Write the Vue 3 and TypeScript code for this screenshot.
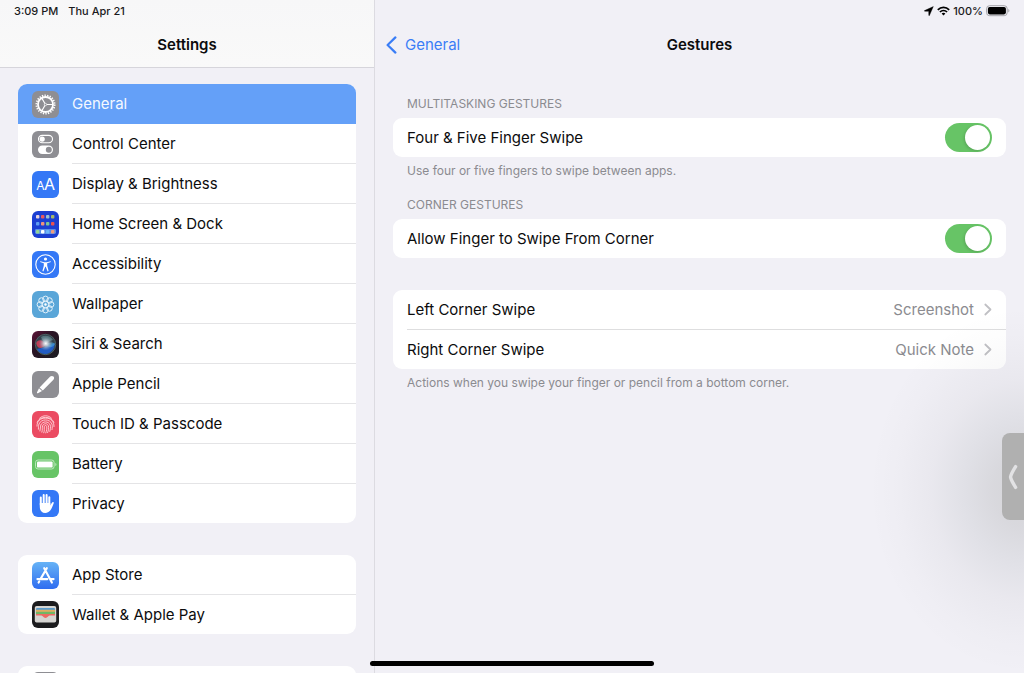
<script setup lang="ts">
import { ref } from 'vue'

interface Item {
  id: string
  label: string
}

const groups: Item[][] = [
  [
    { id: 'general', label: 'General' },
    { id: 'control', label: 'Control Center' },
    { id: 'display', label: 'Display & Brightness' },
    { id: 'home', label: 'Home Screen & Dock' },
    { id: 'access', label: 'Accessibility' },
    { id: 'wallpaper', label: 'Wallpaper' },
    { id: 'siri', label: 'Siri & Search' },
    { id: 'pencil', label: 'Apple Pencil' },
    { id: 'touch', label: 'Touch ID & Passcode' },
    { id: 'battery', label: 'Battery' },
    { id: 'privacy', label: 'Privacy' },
  ],
  [
    { id: 'store', label: 'App Store' },
    { id: 'wallet', label: 'Wallet & Apple Pay' },
  ],
  [{ id: 'more', label: '' }],
]

const tileFill: Record<string, string> = {
  general: '#8e8e93',
  control: '#8e8e93',
  display: '#3478f6',
  home: '#1c3fd2',
  access: '#3478f6',
  wallpaper: '#5aa6d8',
  siri: 'url(#siri-base)',
  pencil: '#8e8e93',
  touch: '#eb4b62',
  battery: '#67c466',
  privacy: '#3478f6',
  store: 'url(#store-base)',
  wallet: '#1c1c1e',
  more: '#8e8e93',
}

const homeDots: { x: number; y: number; fill: string }[] = [
  ['#e6d3dc', '#ea5a5c', '#9cc0cc', '#a8b866'],
  ['#5f9df0', '#f0937c', '#7cc596', '#ea5350'],
  ['#93d494', '#ffffff', '#6db5f7', '#f29c7c'],
].flatMap((row, r) => row.map((fill, c) => ({ x: 4 + c * 5, y: [4, 11, 19][r], fill })))

const petals = Array.from({ length: 8 }, (_, i) => ({
  x: 13.5 + 5.6 * Math.cos((i * Math.PI) / 4),
  y: 13.5 + 5.6 * Math.sin((i * Math.PI) / 4),
}))

const active = ref('general')
const multitask = ref(true)
const corner = ref(true)
const corners = [
  { label: 'Left Corner Swipe', value: 'Screenshot' },
  { label: 'Right Corner Swipe', value: 'Quick Note' },
]
</script>

<template>
  <div class="screen">
    <aside class="sidebar">
      <header class="side-head">
        <div class="status">
          <span>3:09 PM</span>
          <span>Thu Apr 21</span>
        </div>
        <h1 class="title">Settings</h1>
      </header>
      <nav class="side-body">
        <ul v-for="(group, g) in groups" :key="g" class="card">
          <li v-for="item in group" :key="item.id">
            <button type="button" class="item" :class="{ active: active === item.id }" @click="active = item.id">
              <svg class="tile" viewBox="0 0 27 27" aria-hidden="true">
                <defs v-if="item.id === 'siri'">
                  <linearGradient id="siri-base" x1="0" y1="0" x2="1" y2="1">
                    <stop offset="0" stop-color="#5e1438" />
                    <stop offset="0.4" stop-color="#2a1424" />
                    <stop offset="1" stop-color="#1b1d22" />
                  </linearGradient>
                  <radialGradient id="siri-glow">
                    <stop offset="0" stop-color="#ffffff" />
                    <stop offset="0.35" stop-color="#c9d3dc" stop-opacity="0.85" />
                    <stop offset="1" stop-color="#8fa6b8" stop-opacity="0" />
                  </radialGradient>
                </defs>
                <defs v-if="item.id === 'store'">
                  <linearGradient id="store-base" x1="0" y1="0" x2="0" y2="1">
                    <stop offset="0" stop-color="#66b3f6" />
                    <stop offset="1" stop-color="#2f6df0" />
                  </linearGradient>
                </defs>
                <rect width="27" height="27" rx="6" :fill="tileFill[item.id]" />

                <g v-if="item.id === 'general'" fill="none" stroke="#fff">
                  <circle cx="13.5" cy="13.5" r="9.1" stroke-width="1.8" stroke-dasharray="1.3 1.3" />
                  <circle cx="13.5" cy="13.5" r="7.5" stroke-width="1.8" />
                  <path d="M13.5 13.5H21M13.5 13.5L9.8 7.1M13.5 13.5L9.8 19.9" stroke-width="1.1" />
                  <circle cx="13.5" cy="13.5" r="1.2" fill="#8e8e93" stroke-width="0.7" />
                </g>

                <g v-else-if="item.id === 'control'">
                  <rect x="6.5" y="4.4" width="14" height="7.4" rx="3.7" fill="none" stroke="#fff" stroke-width="1.1" />
                  <circle cx="10.2" cy="8.1" r="2.6" fill="#fff" />
                  <rect x="6" y="14.6" width="15" height="8.4" rx="4.2" fill="#fff" />
                  <circle cx="16.8" cy="18.8" r="3" fill="#8e8e93" />
                </g>

                <g v-else-if="item.id === 'display'" class="glyph-text">
                  <text x="4.2" y="19" font-size="12">A</text>
                  <text x="12" y="19" font-size="16">A</text>
                </g>

                <g v-else-if="item.id === 'home'">
                  <rect x="3" y="18" width="21" height="5" rx="1.4" fill="#5b8ee8" />
                  <rect v-for="(d, i) in homeDots" :key="i" :x="d.x" :y="d.y" width="3.4" height="3.4" rx="0.9" :fill="d.fill" />
                </g>

                <g v-else-if="item.id === 'access'">
                  <circle cx="13.5" cy="13.5" r="9.7" fill="none" stroke="#fff" stroke-width="1.1" />
                  <circle cx="13.5" cy="8" r="1.6" fill="#fff" />
                  <path d="M8.3 10.2L12.2 11.2H14.8L18.7 10.2L18.9 11.1L15.2 12.3V14.8L16.6 20L15.6 20.4L13.8 15.8H13.2L11.4 20.4L10.4 20L11.8 14.8V12.3L8.1 11.1Z" fill="#fff" />
                </g>

                <g v-else-if="item.id === 'wallpaper'" fill="none" stroke="#e4f2fb" stroke-width="1">
                  <circle v-for="(p, i) in petals" :key="i" :cx="p.x" :cy="p.y" r="2.8" />
                  <circle cx="13.5" cy="13.5" r="3.6" />
                  <circle cx="13.5" cy="13.5" r="1" fill="#fff" />
                </g>

                <g v-else-if="item.id === 'siri'">
                  <circle cx="13.5" cy="13.5" r="10.2" fill="#35404c" stroke="#4f6e6c" stroke-width="0.8" />
                  <path d="M4.2 12C6 7.5 11 9 14 13C10 19 5 18 4.2 12Z" fill="#d8415c" opacity="0.85" />
                  <path d="M5 18C10 17 14 16 22.5 12C23.5 18 18 23.5 13 23C9 22.6 6.5 21 5 18Z" fill="#1e62d8" opacity="0.85" />
                  <path d="M9 6C13 3.5 19 5 21 9C18 10 15 11 13 13C11 10.5 10 8.5 9 6Z" fill="#62838b" opacity="0.8" />
                  <path d="M14 14C17 11 21 11 23 13C21 17 17 17 14 14Z" fill="#4aa8d8" opacity="0.6" />
                  <circle cx="13.8" cy="12.5" r="7" fill="url(#siri-glow)" />
                </g>

                <g v-else-if="item.id === 'pencil'" fill="#fff">
                  <path d="M7.6 16.4L18.2 5.6C19.2 4.7 20.6 4.7 21.5 5.6C22.4 6.5 22.3 7.9 21.4 8.8L10.8 19.5Z" />
                  <path d="M7 17.2L10 20.1L5.9 22.2C5.2 22.5 4.7 22 5 21.3Z" />
                </g>

                <g v-else-if="item.id === 'touch'" fill="none" stroke="#ffd5da" stroke-width="0.9" stroke-linecap="round">
                  <path d="M7.6 7.2C11 3.9 16.2 3.9 19.5 7.2" />
                  <path d="M5.2 11.2C7.5 4.7 19.6 4.5 21.9 11.4" />
                  <path d="M5 15.2C4.8 9.8 8.5 7.1 13.5 7.1C18.8 7.1 22.2 10.2 22 15.6" />
                  <path d="M6.4 18.2C6.5 16 6.3 14.8 7 13C9.3 7.5 17.9 7.6 20 13.2C20.5 15 20.3 16.6 20 18.6" />
                  <path d="M8 20C8.6 18 8.2 15.8 8.8 14C10.6 9.9 16.5 9.9 18.2 14C18.8 16.2 18.4 18.4 17.8 20.4" />
                  <path d="M9.9 21.2C10.7 18.8 10 16.5 10.6 14.8C11.8 12 15.3 12 16.4 14.8C17 17 16.4 19.6 15.6 21.6" />
                  <path d="M11.8 21.8C12.8 19.4 12 17.4 12.3 15.6C12.8 14 14.3 14.1 14.7 15.6C15 17.6 14.6 19.8 13.8 21.9" />
                </g>

                <g v-else-if="item.id === 'battery'">
                  <rect x="3.5" y="9" width="18.6" height="9" rx="2.5" fill="none" stroke="#c5eac5" stroke-width="0.9" />
                  <rect x="5" y="10.4" width="15.6" height="6.2" rx="1.2" fill="#fff" />
                  <path d="M23.4 12V15C24.8 14.6 24.8 12.4 23.4 12Z" fill="#c5eac5" />
                </g>

                <g v-else-if="item.id === 'privacy'">
                  <g fill="none" stroke="#fff" stroke-linecap="round" stroke-width="2">
                    <path d="M8.8 7.4V15M11.7 5.1V14M14.6 5.1V14M17.3 7.2V15" />
                  </g>
                  <path d="M7.8 13H18.3V15.6C19.2 14.4 19.6 12.6 20.7 12C21.5 11.8 22 12.4 21.8 13.1C20.8 15.6 20 18.4 18.2 20.6C16.8 22.3 15.3 23 13.3 23C9.7 23 7.8 20.4 7.8 17Z" fill="#fff" />
                </g>

                <g v-else-if="item.id === 'store'" fill="none" stroke="#fff" stroke-width="2.1" stroke-linecap="round">
                  <path d="M12.2 6.2L19.9 20.6M14.8 6.2L8.6 16.9M5.4 17.1H15.4M19 17.1H21.6M7.2 19.5L6.6 20.6" />
                </g>

                <g v-else-if="item.id === 'wallet'">
                  <rect x="2.8" y="5" width="21.4" height="16.6" rx="1.8" fill="#d6d5d2" />
                  <rect x="4" y="7" width="19" height="3" rx="1" fill="#5b9bcb" />
                  <rect x="4" y="8.8" width="19" height="2.2" fill="#dfae62" />
                  <rect x="4" y="10.8" width="19" height="2.4" fill="#70b765" />
                  <path d="M4 12.9H23V14.6H17.6C16 14.8 15.8 16.9 13.5 16.9S11 14.8 9.4 14.6H4Z" fill="#ed6a62" />
                </g>
              </svg>
              <span class="label">{{ item.label }}</span>
            </button>
          </li>
        </ul>
      </nav>
    </aside>

    <main class="pane">
      <header class="pane-head">
        <div class="status right">
          <svg width="10" height="10" viewBox="0 0 10 10" aria-hidden="true">
            <path d="M9.3 0.6L0.6 4.6C0.2 4.8 0.3 5.2 0.7 5.2L4.7 5.3L4.8 9.3C4.8 9.7 5.2 9.8 5.4 9.4Z" fill="#000" stroke="#000" stroke-width="0.4" />
          </svg>
          <svg width="13" height="10" viewBox="0 0 13 10" aria-hidden="true">
            <g fill="none" stroke="#000" stroke-width="1.7">
              <path d="M0.8 3.8C4 0.6 9 0.6 12.2 3.8" />
              <path d="M2.9 6C5 4 8 4 10.1 6" />
            </g>
            <path d="M4.6 7.6C5.7 6.6 7.3 6.6 8.4 7.6L6.5 9.6Z" fill="#000" />
          </svg>
          <span>100%</span>
          <svg width="24" height="12" viewBox="0 0 24 12" aria-hidden="true">
            <rect x="0.6" y="0.7" width="20.6" height="10" rx="3" fill="none" stroke="#a3a3a8" stroke-width="1" />
            <rect x="1.9" y="2" width="18" height="7.4" rx="1.8" fill="#000" />
            <path d="M22.3 4V7.4C23.8 7 23.8 4.4 22.3 4Z" fill="#a3a3a8" />
          </svg>
        </div>
        <div class="bar">
          <button type="button" class="back">
            <svg width="11" height="18" viewBox="0 0 11 18" aria-hidden="true">
              <path d="M9.4 1.4L1.6 9L9.4 16.6" fill="none" stroke="#3a7df6" stroke-width="2.2" stroke-linecap="round" stroke-linejoin="round" />
            </svg>
            <span>General</span>
          </button>
          <h2 class="title">Gestures</h2>
        </div>
      </header>

      <div class="pane-body">
        <section class="section">
          <h3 class="caption">MULTITASKING GESTURES</h3>
          <div class="card">
            <label class="row">
              <span>Four &amp; Five Finger Swipe</span>
              <input v-model="multitask" type="checkbox" role="switch" class="switch" />
            </label>
          </div>
          <p class="caption">Use four or five fingers to swipe between apps.</p>
        </section>

        <section class="section after-note">
          <h3 class="caption">CORNER GESTURES</h3>
          <div class="card">
            <label class="row">
              <span>Allow Finger to Swipe From Corner</span>
              <input v-model="corner" type="checkbox" role="switch" class="switch" />
            </label>
          </div>
        </section>

        <section class="section after-card">
          <ul class="card">
            <li v-for="c in corners" :key="c.label" class="choice">
              <button type="button" class="row">
                <span>{{ c.label }}</span>
                <span class="value">
                  {{ c.value }}
                  <svg width="8" height="13" viewBox="0 0 8 13" aria-hidden="true">
                    <path d="M1.3 1.5L6.5 6.5L1.3 11.5" fill="none" stroke="#c0c0c4" stroke-width="1.8" stroke-linecap="round" stroke-linejoin="round" />
                  </svg>
                </span>
              </button>
            </li>
          </ul>
          <p class="caption">Actions when you swipe your finger or pencil from a bottom corner.</p>
        </section>
      </div>
    </main>

    <div class="drawer">
      <button type="button" class="handle" aria-label="Open drawer">
        <svg width="10" height="26" viewBox="0 0 10 26" aria-hidden="true">
          <path d="M7.6 2.6C5 6.7 3.4 9.6 2.7 12.2Q2.4 13 2.7 13.8C3.4 16.4 5 19.3 7.6 23.4" fill="none" stroke="#e2e2e4" stroke-width="3.4" stroke-linecap="round" />
        </svg>
      </button>
    </div>
    <div class="home-bar"></div>
  </div>
</template>

<style>
body {
  margin: 0;
  background: #f1f0f6;
}
</style>

<style scoped>
.screen {
  position: relative;
  display: grid;
  grid-template-columns: 375px minmax(0, 1fr);
  height: 100vh;
  overflow: hidden;
  background: #f1f0f6;
  color: #0c0c0d;
  font-family: Inter, 'Liberation Sans', sans-serif;
  font-size: 15px;
  line-height: 20px;
}

.screen *,
.screen *::before {
  box-sizing: border-box;
}

button {
  padding: 0;
  border: 0;
  background: none;
  color: inherit;
  font: inherit;
  text-align: left;
  cursor: pointer;
}

ul {
  margin: 0;
  padding: 0;
  list-style: none;
}

svg {
  display: block;
  flex: none;
}

.sidebar {
  display: flex;
  flex-direction: column;
  min-height: 0;
  overflow: hidden;
  border-right: 1px solid #dcdbe1;
}

.side-head {
  flex: none;
  height: 68px;
  border-bottom: 1px solid #d6d5db;
  background: linear-gradient(#f7f7f8, #f9f9f9);
}

.status {
  display: flex;
  align-items: center;
  gap: 10px;
  height: 21px;
  padding: 0 14px;
  color: #1a1a1c;
  font-size: 11px;
  font-weight: 500;
}

.status.right {
  justify-content: flex-end;
  gap: 3px;
}

.title {
  margin: 0;
  font-size: 15px;
  font-weight: 600;
  line-height: 47px;
  text-align: center;
}

.side-body {
  display: flex;
  flex-direction: column;
  gap: 32px;
  padding: 16px 18px;
}

.card {
  flex: none;
  overflow: hidden;
  border-radius: 9px;
  background: #fff;
}

.item {
  display: flex;
  align-items: stretch;
  gap: 13px;
  width: 100%;
  padding-left: 14px;
}

.tile {
  align-self: center;
  width: 27px;
  height: 27px;
}

.glyph-text {
  fill: #fff;
  font-family: Inter, sans-serif;
}

.label {
  flex: 1;
  height: 40px;
  border-bottom: 1px solid #e4e4e6;
  line-height: 40px;
}

li:last-child .label {
  height: 39px;
  border-bottom: 0;
  line-height: 39px;
}

.item.active {
  background: #64a0f8;
  color: #f4f8ff;
}

.item.active .label {
  border-color: transparent;
}

.pane {
  min-width: 0;
}

.pane-head {
  height: 68px;
}

.bar {
  display: grid;
  grid-template-columns: 1fr auto 1fr;
  align-items: center;
  padding: 0 11px;
}

.back {
  display: flex;
  align-items: center;
  justify-self: start;
  gap: 8px;
  color: #3a7df6;
}

.pane-body {
  padding: 28px 18px 0;
}

.section {
  display: flex;
  flex-direction: column;
  gap: 6px;
}

.after-note {
  margin-top: 18px;
}

.after-card {
  margin-top: 32px;
}

.caption {
  margin: 0;
  padding: 0 14px;
  color: #8b8b90;
  font-size: 12px;
  font-weight: 400;
  line-height: 16px;
}

.row {
  display: flex;
  align-items: center;
  justify-content: space-between;
  width: 100%;
  height: 39px;
  padding-right: 14px;
}

label.row {
  padding-left: 14px;
}

.choice {
  padding-left: 14px;
}

.choice + .choice .row {
  height: 40px;
  border-top: 1px solid #dededf;
}

.value {
  display: flex;
  align-items: center;
  gap: 10px;
  color: #8b8b90;
}

.switch {
  appearance: none;
  display: flex;
  align-items: center;
  width: 47px;
  height: 29px;
  margin: 0;
  padding: 0 2px;
  border-radius: 15px;
  background: #e3e3e6;
  cursor: pointer;
}

.switch::before {
  content: '';
  width: 25px;
  height: 25px;
  border-radius: 50%;
  background: #fff;
  box-shadow: -1px 1px 3px rgba(0, 0, 0, 0.15);
}

.switch:checked {
  justify-content: flex-end;
  background: #67c466;
}

.drawer {
  position: absolute;
  top: 305px;
  right: 0;
  display: flex;
  justify-content: flex-end;
  width: 160px;
  height: 370px;
  padding-top: 128px;
  background: radial-gradient(155px 184px at 100% 50%, rgba(20, 24, 12, 0.13) 0%, rgba(20, 26, 22, 0.11) 20%, rgba(10, 24, 30, 0.075) 38%, rgba(20, 20, 30, 0.035) 60%, rgba(20, 20, 30, 0.01) 82%, rgba(20, 20, 30, 0) 100%);
  pointer-events: none;
}

.handle {
  display: flex;
  align-items: center;
  justify-content: center;
  width: 22px;
  height: 87px;
  border-radius: 8px 0 0 8px;
  background: #b0b0b0;
  pointer-events: auto;
}

.home-bar {
  position: absolute;
  bottom: 7px;
  left: 50%;
  width: 284px;
  height: 5px;
  margin-left: -142px;
  border-radius: 3px;
  background: #000;
}
</style>
